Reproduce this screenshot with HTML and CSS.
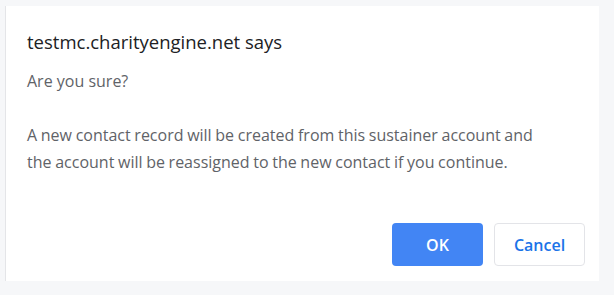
FILE: index.html
```html
<!DOCTYPE html>
<html lang="en">
<head>
    <meta charset="UTF-8">
    <meta name="viewport" content="width=device-width, initial-scale=1.0">
    <title>testmc.charityengine.net says</title>
    <link rel="stylesheet" href="styles.css">
</head>
<body>
    <div class="dialog">
        <div class="dialog-body">
            <h1 class="dialog-title">testmc.charityengine.net says</h1>
            <p class="dialog-text">Are you sure?</p>
            <p class="dialog-text message">A new contact record will be created from this sustainer account and the account will be reassigned to the new contact if you continue.</p>
        </div>
        <div class="dialog-buttons">
            <button class="btn btn-ok">OK</button>
            <button class="btn btn-cancel">Cancel</button>
        </div>
    </div>
</body>
</html>
```

FILE: styles.css
```css
body {
    margin: 0;
    padding: 6px 15px 14px 5px;
    background-color: #f6f7f9;
    font-family: "Open Sans", "Noto Sans", sans-serif;
}

.dialog {
    display: flex;
    flex-direction: column;
    justify-content: space-between;
    height: 275px;
    background-color: white;
    border-left: 1px solid #e4e5e8;
    box-sizing: border-box;
    padding: 0 14px 15px 21px;
}

.dialog-body {
    padding-top: 24px;
}

.dialog-title {
    margin: 0 0 14px 0;
    font-size: 18.5px;
    font-weight: normal;
    line-height: 24px;
    color: #202124;
}

.dialog-text {
    margin: 0 0 27px 0;
    font-size: 16px;
    line-height: 27px;
    color: #5f6368;
}

.message {
    max-width: 520px;
    margin: 0;
    word-spacing: -0.5px;
}

.dialog-buttons {
    display: flex;
    justify-content: flex-end;
    gap: 11px;
}

.btn {
    width: 91px;
    height: 43px;
    border-radius: 4px;
    font-family: "Open Sans", "Noto Sans", sans-serif;
    font-size: 16px;
    font-weight: 600;
    cursor: pointer;
}

.btn-ok {
    background-color: #4285f4;
    border: none;
    color: white;
}

.btn-cancel {
    background-color: white;
    border: 1px solid #e3e4e8;
    color: #1a73e8;
}
```
